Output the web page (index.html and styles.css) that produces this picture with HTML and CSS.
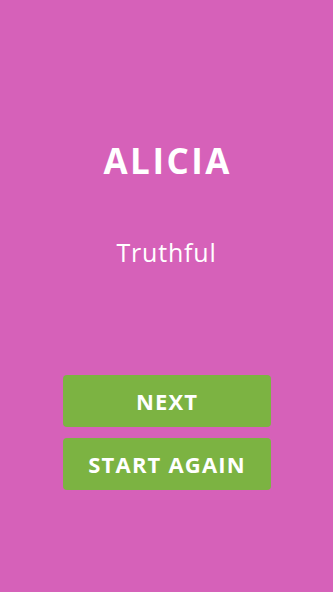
FILE: index.html
```html
<!DOCTYPE html>
<html>
<head>
<meta charset="utf-8">
<link rel="stylesheet" href="styles.css">
</head>
<body>
<main class="screen">
  <h1 class="name">ALICIA</h1>
  <p class="trait">Truthful</p>
  <div class="actions">
    <button class="btn">NEXT</button>
    <button class="btn">START AGAIN</button>
  </div>
</main>
</body>
</html>
```
FILE: styles.css
```css
html, body {
  margin: 0;
  padding: 0;
  background: #d661b9;
}
.screen {
  width: 333px;
  height: 592px;
  display: flex;
  flex-direction: column;
  align-items: center;
  font-family: "Open Sans", "DejaVu Sans", sans-serif;
  color: #ffffff;
}
.name {
  margin: 139px 0 0;
  font-size: 35px;
  line-height: 44px;
  font-weight: 700;
  letter-spacing: 2.5px;
  padding-left: 2.5px;
}
.trait {
  margin: 54px 0 0;
  font-size: 25px;
  line-height: 30px;
  font-weight: 500;
  letter-spacing: 0.8px;
}
.actions {
  margin-top: 108px;
  display: flex;
  flex-direction: column;
  gap: 11px;
}
.btn {
  width: 208px;
  height: 52px;
  border: none;
  border-radius: 4px;
  background: #7cb342;
  color: #ffffff;
  font-family: "Open Sans", "DejaVu Sans", sans-serif;
  font-size: 22px;
  font-weight: 700;
  letter-spacing: 1.2px;
  padding: 0 0 0 1.2px;
}
```
